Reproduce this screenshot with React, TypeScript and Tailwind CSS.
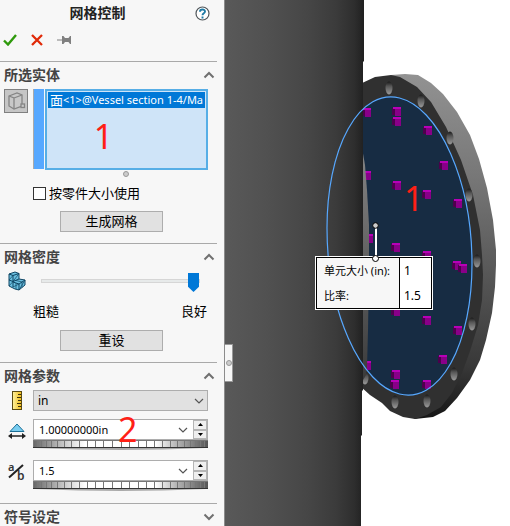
import { useState, type ReactNode } from "react";

const CUBES: [number, number][] = [
  [367, 112], [397, 111], [397, 121], [428, 130], [444, 165], [367, 175],
  [397, 185], [427, 194], [458, 203], [369, 238], [396, 247], [427, 255],
  [457, 265], [463, 268], [396, 311], [427, 320], [458, 330], [443, 359],
  [367, 365], [396, 374], [395, 384], [427, 384],
];

const HOLES: [number, number][] = [
  [389, 88], [421, 101], [450, 138], [469, 195], [477, 261],
  [472, 324], [454, 374], [427, 401], [395, 402], [365, 378],
];

function Chevron({ open }: { open: boolean }) {
  return (
    <svg width="12" height="8" viewBox="0 0 12 8" fill="none" stroke="#707070" strokeWidth="2" aria-hidden="true">
      <path d={open ? "M1.5 6.5 6 2l4.500 4.500" : "M1.500 1.500 6 6l4.500-4.500"} />
    </svg>
  );
}

function Section({ title, children }: { title: string; children?: ReactNode }) {
  const [open, setOpen] = useState(Boolean(children));
  return (
    <section className="mr-[7px] border-t border-[#a9a9a9]">
      <h2>
        <button
          type="button"
          aria-expanded={open}
          onClick={() => setOpen(!open)}
          className="flex h-[26px] w-full items-center justify-between pr-[2px] pl-1 text-[14px] leading-[26px] font-bold text-[#444]"
        >
          {title}
          <Chevron open={open} />
        </button>
      </h2>
      {open && children}
    </section>
  );
}

function PushButton({ children }: { children: ReactNode }) {
  return (
    <button
      type="button"
      className="mx-auto block h-[21px] w-[103px] border border-[#adadad] bg-[#e1e1e1] text-[13px] leading-[19px] text-black"
    >
      {children}
    </button>
  );
}

function DropArrow() {
  return (
    <svg width="10" height="6" viewBox="0 0 10 6" fill="none" stroke="#555" strokeWidth="1.200" aria-hidden="true">
      <path d="M1 1l4 4 4-4" />
    </svg>
  );
}

function Thumbwheel() {
  const count = 27;
  return (
    <svg className="block h-[10px] w-full" viewBox="0 0 175 10" preserveAspectRatio="none" aria-hidden="true">
      <defs>
        <linearGradient id="wheel">
          <stop offset="0" stopColor="#666" />
          <stop offset="0.200" stopColor="#d5d5d5" />
          <stop offset="0.300" stopColor="#fff" />
          <stop offset="0.700" stopColor="#fff" />
          <stop offset="0.820" stopColor="#b5b5b5" />
          <stop offset="1" stopColor="#555" />
        </linearGradient>
      </defs>
      <path d="M2 8Q88 12 173 8z" fill="#aaa" />
      <rect width="175" height="8" fill="url(#wheel)" />
      {Array.from({ length: count }, (_, i) => {
        const x = 87.5 + 87.5 * Math.sin(((i - 13) / 13) * 1.2) / Math.sin(1.2);
        return <path key={i} d={`M${Math.round(x)}.500 0V8`} stroke="#777" />;
      })}
      <path d="M0 .5H175" stroke="#777" />
      <path d="M0 7.500H175" stroke="#333" />
    </svg>
  );
}

function SpinField({ label, initial, step, suffix, digits, icon }: {
  label: string; initial: string; step: number; suffix: string; digits: number; icon: ReactNode;
}) {
  const [value, setValue] = useState(initial);
  const bump = (d: number) => setValue((parseFloat(value) + d).toFixed(digits) + suffix);
  return (
    <div className="flex">
      <span className="flex h-[24px] w-[33px] items-center justify-center">{icon}</span>
      <div className="min-w-0 flex-1">
        <div className="flex h-[21px] border border-[#adadad] bg-white">
          <input
            aria-label={label}
            value={value}
            onChange={(e) => setValue(e.target.value)}
            className="min-w-0 flex-1 pl-[5px] text-[11px] leading-[19px] text-black outline-none"
          />
          <button type="button" aria-label={`${label} ▾`} className="flex w-[20px] items-center justify-center">
            <DropArrow />
          </button>
          <div className="flex w-[14px] flex-col">
            <button type="button" aria-label={`${label} +`} onClick={() => bump(step)} className="flex flex-1 items-center justify-center border border-[#b5b5b5] bg-[#efefef]">
              <svg width="5" height="3" viewBox="0 0 5 3" aria-hidden="true"><path d="M2.500 0 5 3H0z" /></svg>
            </button>
            <button type="button" aria-label={`${label} -`} onClick={() => bump(-step)} className="flex flex-1 items-center justify-center border border-[#b5b5b5] bg-[#efefef]">
              <svg width="5" height="3" viewBox="0 0 5 3" aria-hidden="true"><path d="M2.500 3 5 0H0z" /></svg>
            </button>
          </div>
        </div>
        <Thumbwheel />
      </div>
    </div>
  );
}

function FaceIcon() {
  return (
    <svg width="20" height="20" viewBox="0 0 20 20" fill="none" stroke="#858585" strokeWidth="1.300" aria-hidden="true">
      <path d="M3 5l8-3 5 2v11l-8 3-5-3z" fill="#c8c8c8" />
      <path d="M3 5l5 2v11M8 7l8-3" />
      <rect x="15" y="13" width="3.500" height="3.500" fill="#c8c8c8" />
    </svg>
  );
}

function MeshIcon() {
  return (
    <svg width="18" height="20" viewBox="0 0 18 20" fill="#6cc0e0" stroke="#0f4563" strokeLinejoin="round" aria-hidden="true">
      <path d="M1 3l6-2 4 1.500V8l6 1v5l-6 5-4-1-6-3z" />
      <path d="M1 3l4 1.500 6-2M5 4.500V16M1 9l4 1.500 6-2.500M5 11l6 2v6M11 13l6-4" fill="none" />
      <path d="M1 9l4-4.500M1 15l4-4.500M5 10.500l6-8M5 16l6-3M8 9.500l6 1.500v5.500M8 12v6M11 19l6-10" fill="none" strokeWidth=".7" />
    </svg>
  );
}

function RulerIcon() {
  return (
    <svg width="10" height="19" viewBox="0 0 10 19" aria-hidden="true">
      <defs>
        <linearGradient id="ruler"><stop stopColor="#fff3a0" /><stop offset="1" stopColor="#f2bd18" /></linearGradient>
      </defs>
      <rect x=".5" y=".5" width="9" height="18" fill="url(#ruler)" stroke="#5b4a10" />
      <path d="M6 3.500h3M5 6.500h4M6 9.500h3M5 12.500h4M6 15.500h3" stroke="#3c3210" />
    </svg>
  );
}

function SizeIcon() {
  return (
    <svg width="18" height="17" viewBox="0 0 18 17" aria-hidden="true">
      <path d="M9 1l7 7.500H2z" fill="#79cdf0" stroke="#1d6f96" />
      <path d="M2 13h14" stroke="#222" strokeWidth="1.500" />
      <path d="M0 13l4-3v6zM18 13l-4-3v6z" fill="#222" />
    </svg>
  );
}

function RatioIcon() {
  return (
    <svg width="20" height="24" viewBox="0 0 20 24" fill="#333" fontFamily="Noto Sans, sans-serif" fontWeight="600" aria-hidden="true">
      <text x="1" y="11" fontSize="11">a</text>
      <text x="10" y="20" fontSize="12">b</text>
      <path d="M2 17.500 16 5" stroke="#222" strokeWidth="2" />
    </svg>
  );
}

function PropertyPanel() {
  const [density, setDensity] = useState(100);
  return (
    <aside className="h-full w-[225px] shrink-0 overflow-hidden border-r border-[#8c8c8c] bg-[#f7f7f7]">
      <header className="h-[61px]">
        <div className="flex h-[26px] items-center pr-[14px]">
          <h1 className="flex-1 text-center text-[14px] leading-[26px] font-bold text-[#222]">网格控制</h1>
          <button type="button" aria-label="帮助">
            <svg width="15" height="15" viewBox="0 0 15 15" fill="none" aria-hidden="true">
              <circle cx="7.500" cy="7.500" r="6.500" fill="#fff" stroke="#50565a" strokeWidth="1.200" />
              <path d="M5 5.800C5 2.800 10 2.800 10 5.500 10 7.400 7.500 7.200 7.500 9.300M7.500 10.500v2" stroke="#1e7aa5" strokeWidth="1.900" />
            </svg>
          </button>
        </div>
        <div className="flex h-[28px] items-center gap-[14px] pl-[3px]">
          <button type="button" aria-label="确定">
            <svg width="14" height="12" viewBox="0 0 14 12" fill="none" stroke="#2f9a0c" strokeWidth="2.400" aria-hidden="true"><path d="M1 6.500l4 4L13 1" /></svg>
          </button>
          <button type="button" aria-label="取消">
            <svg width="12" height="12" viewBox="0 0 12 12" fill="none" stroke="#e02a08" strokeWidth="2.300" aria-hidden="true"><path d="M1 1l10 10M11 1 1 11" /></svg>
          </button>
          <button type="button" aria-label="保持可见">
            <svg width="14" height="10" viewBox="0 0 14 10" fill="#808080" aria-hidden="true">
              <path d="M0 4.500h5V1l1.500 0L8 3h3.500L13 1h1v8h-1l-1.500-2H8L6.500 9H5V5.500H0z" />
            </svg>
          </button>
        </div>
      </header>

      <Section title="所选实体">
        <div className="pt-px pb-[11px]">
          <div className="flex pr-[9px]">
            <button type="button" aria-label="面" className="ml-1 flex h-[24px] w-[24px] items-center justify-center border border-[#808080] bg-[#c6c6c6]">
              <FaceIcon />
            </button>
            <div className="ml-[5px] h-[80px] w-[11px] border-l border-[#aaa] bg-[#57a8ff]" />
            <div className="ml-px h-[81px] min-w-0 flex-1 border-2 border-[#57aee6] bg-[#cfe4f8] p-px">
              <ul role="listbox" aria-label="所选实体">
                <li role="option" aria-selected="true" className="flex h-[16px] items-center bg-[#0078d7] pl-[2px] text-[11px] leading-[16px] whitespace-nowrap text-white">
                  <span className="text-[13px]">面</span>&lt;1&gt;@Vessel section 1-4/Ma
                </li>
              </ul>
              <p className="pt-[8px] pr-[46px] text-center text-[34px] leading-[40px] text-[#ff2015]">1</p>
            </div>
          </div>
          <div className="flex justify-center pt-px pl-[35px]">
            <span className="h-[6px] w-[6px] rounded-full border border-[#999] bg-[#ccc]" />
          </div>
          <label className="mt-[6px] flex h-[20px] items-center gap-[3px] pl-[33px] text-[13px] leading-[20px] text-black">
            <input type="checkbox" className="h-[13px] w-[13px] appearance-none border border-[#333] bg-white checked:bg-[#0078d7]" />
            按零件大小使用
          </label>
          <div className="pt-[8px] pl-[6px]">
            <PushButton>生成网格</PushButton>
          </div>
        </div>
      </Section>

      <Section title="网格密度">
        <div className="pt-px pb-[11px]">
          <div className="flex h-[20px] items-center pr-[17px] pl-[8px]">
            <MeshIcon />
            <input
              type="range"
              aria-label="网格密度"
              value={density}
              onChange={(e) => setDensity(Number(e.target.value))}
              className="ml-[15px] h-[20px] min-w-0 flex-1 appearance-none bg-transparent [&::-webkit-slider-runnable-track]:h-[4px] [&::-webkit-slider-runnable-track]:border [&::-webkit-slider-runnable-track]:border-[#d6d6d6] [&::-webkit-slider-runnable-track]:bg-[#e7eaea] [&::-webkit-slider-thumb]:-mt-[7px] [&::-webkit-slider-thumb]:h-[19px] [&::-webkit-slider-thumb]:w-[11px] [&::-webkit-slider-thumb]:appearance-none [&::-webkit-slider-thumb]:bg-[#0078d7] [&::-webkit-slider-thumb]:[clip-path:polygon(0_0,100%_0,100%_72%,50%_100%,0_72%)]"
            />
          </div>
          <div className="flex justify-between pt-[10px] pr-[10px] pl-[33px] text-[13px] leading-[20px] text-black">
            <span>粗糙</span>
            <span>良好</span>
          </div>
          <div className="pt-[9px] pl-[6px]">
            <PushButton>重设</PushButton>
          </div>
        </div>
      </Section>

      <Section title="网格参数">
        <div className="flex flex-col pt-px pr-[9px] pb-[12px]">
          <div className="flex h-[21px] items-center">
            <span className="flex w-[33px] justify-center"><RulerIcon /></span>
            <div className="grid min-w-0 flex-1 items-center">
              <select aria-label="单位" className="col-start-1 row-start-1 h-[21px] w-full appearance-none border border-[#adadad] bg-[#e1e1e1] pl-1 text-[12px] leading-[19px] text-black">
                <option>in</option>
                <option>mm</option>
              </select>
              <span className="pointer-events-none col-start-1 row-start-1 mr-[4px] justify-self-end"><DropArrow /></span>
            </div>
          </div>
          <div className="relative pt-[8px]">
            <SpinField label="单元大小" initial="1.00000000in" step={0.1} suffix="in" digits={8} icon={<SizeIcon />} />
            <span className="pointer-events-none absolute top-[-2px] left-[118px] text-[34px] leading-[40px] text-[#ff2015]">2</span>
          </div>
          <div className="pt-[10px]">
            <SpinField label="比率" initial="1.5" step={0.1} suffix="" digits={1} icon={<RatioIcon />} />
          </div>
        </div>
      </Section>

      <Section title="符号设定" />
    </aside>
  );
}

function Model() {
  return (
    <svg width="285" height="526" viewBox="225 0 285 526" className="block" role="img" aria-label="Vessel section">
      <defs>
        <linearGradient id="vessel" gradientUnits="userSpaceOnUse" x1="224" x2="364" y1="0" y2="0">
          <stop offset="0" stopColor="#595959" />
          <stop offset="0.300" stopColor="#515151" />
          <stop offset="0.600" stopColor="#464646" />
          <stop offset="0.800" stopColor="#3b3b3b" />
          <stop offset="0.930" stopColor="#2e2e2e" />
          <stop offset="1" stopColor="#202020" />
        </linearGradient>
        <linearGradient id="rim" gradientUnits="userSpaceOnUse" x1="0" x2="0" y1="74" y2="418">
          <stop offset="0" stopColor="#929292" />
          <stop offset="0.300" stopColor="#777" />
          <stop offset="0.600" stopColor="#555" />
          <stop offset="0.850" stopColor="#383838" />
          <stop offset="1" stopColor="#161616" />
        </linearGradient>
        <linearGradient id="bore" x1="0" x2="0" y1="0" y2="1">
          <stop offset="0" stopColor="#181818" />
          <stop offset="0.350" stopColor="#555" />
          <stop offset="1" stopColor="#9a9a9a" />
        </linearGradient>
        <linearGradient id="wall" x1="0" x2="0" y1="0" y2="1">
          <stop offset="0" stopColor="#858585" />
          <stop offset="1" stopColor="#3a3a3a" />
        </linearGradient>
      </defs>

      <path d="M391 75 405 74 418 75 431 83 443 94 457 112 470 135 479 159 487 188 493 220 496 250 496 265 495 287 492 313 486 340 480 360 470 380 457 398 445 411 433 417 415 419 400 410 470 260z" fill="url(#rim)" />
      <path d="M360 84 375 77 391 75 400 77 417 87 431 102 446 127 461 160 473 195 480 230 482 255 483 275 482 300 478 325 470 351 462 373 452 393 441 407 427 415 415 419 403 417 390 411 382 403 370 395 360 386z" fill="#303030" />
      {HOLES.map(([x, y]) => (
        <ellipse key={`${x}-${y}`} cx={x} cy={y} rx="3.500" ry="6.500" fill="url(#bore)" />
      ))}
      <circle r="1" transform="matrix(72.500 17.900 0 148 399.500 246)" fill="#172c43" />
      {CUBES.map(([x, y]) => (
        <g key={`${x}-${y}`} shapeRendering="crispEdges">
          <rect x={x - 5} y={y - 3} width="3" height="7" fill="#4d004d" />
          <rect x={x - 2} y={y - 3} width="6" height="8" fill="#880088" />
          <rect x={x - 4} y={y - 4} width="8" height="2" fill="#b800b8" />
        </g>
      ))}
      <path d="M362 148 365 165 367 190 369 225 369 270 368 330 367 368 366 375 362 382z" fill="url(#wall)" />
      <path d="M224 0H364V61L363 62V390L362 391V435L361 436V526H224z" fill="url(#vessel)" />
      <circle r="1" transform="matrix(72.500 17.900 0 148 399.500 246)" fill="none" stroke="#57a8ff" strokeWidth="1.200" vectorEffect="non-scaling-stroke" />
      <path d="M376 227V258" stroke="#fff" strokeWidth="2" />
      <circle cx="375.500" cy="225.500" r="2.800" fill="#ccc" stroke="#000" />
    </svg>
  );
}

function Viewport() {
  return (
    <main className="relative h-full min-w-0 flex-1 overflow-hidden bg-white">
      <Model />
      <div className="absolute top-[344px] left-0 flex h-[38px] w-[8px] items-center justify-center border border-l-0 border-[#999] bg-[#f7f7f7]">
        <span className="h-[6px] w-[6px] rounded-full border border-[#999] bg-[#ccc]" />
      </div>
      <span className="absolute top-[178px] left-[179px] text-[34px] leading-[40px] text-[#ff2015]">1</span>
      <div className="absolute top-[256px] left-[90px] border border-white">
        <table className="h-[52px] w-[116px] border-collapse border border-black text-[12px] leading-[16px] text-black">
          <tbody>
            <tr>
              <th scope="row" className="w-[83px] border-r border-black bg-[#f7f7f7] pl-[7px] text-left text-[11px] font-normal whitespace-nowrap">单元大小 (in):</th>
              <td className="bg-white pl-[4px]">1</td>
            </tr>
            <tr>
              <th scope="row" className="border-r border-black bg-[#f7f7f7] pl-[7px] text-left text-[11px] font-normal">比率:</th>
              <td className="bg-white pl-[4px]">1.5</td>
            </tr>
          </tbody>
        </table>
      </div>
      <span className="absolute top-[255px] left-[147px] h-[7px] w-[7px] rounded-full border border-black bg-white" />
    </main>
  );
}

export default function App() {
  return (
    <div className="flex h-screen overflow-hidden bg-white font-['Noto_Sans','Noto_Sans_CJK_SC',sans-serif]">
      <PropertyPanel />
      <Viewport />
    </div>
  );
}
